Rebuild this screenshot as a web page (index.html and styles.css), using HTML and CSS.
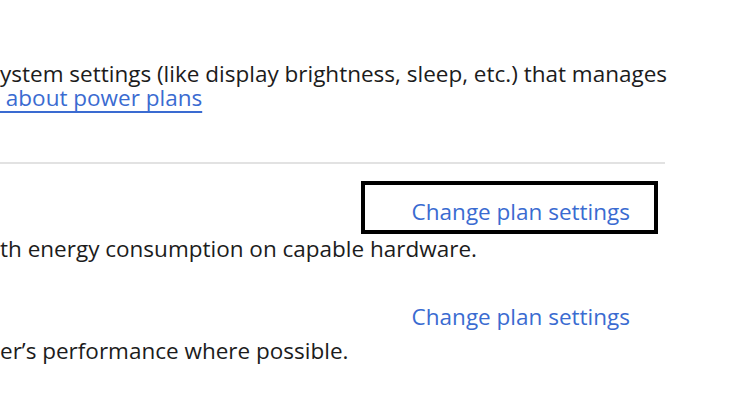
FILE: index.html
```html
<!DOCTYPE html>
<html>
<head>
<meta charset="utf-8">
<link rel="stylesheet" href="styles.css">
</head>
<body>
<div class="page">
  <section class="intro">
    <p class="line">ystem settings (like display brightness, sleep, etc.) that manages</p>
    <p class="line"><a class="link" href="#">&nbsp;about power plans</a></p>
  </section>
  <hr class="divider">
  <section class="plan">
    <div class="plan-head"><a class="link change highlighted" href="#">Change plan settings</a></div>
    <p class="desc">th energy consumption on capable hardware.</p>
  </section>
  <section class="plan second">
    <div class="plan-head"><a class="link change" href="#">Change plan settings</a></div>
    <p class="desc">er’s performance where possible.</p>
  </section>
</div>
</body>
</html>
```
FILE: styles.css
```css
html, body {
  margin: 0;
  padding: 0;
  background: #ffffff;
}
body {
  font-family: "Open Sans", "Noto Sans", sans-serif;
  font-size: 22.5px;
  line-height: 22px;
  color: #1c1c1c;
  width: 730px;
  height: 410px;
  overflow: hidden;
}
.page {
  padding-top: 62px;
}
p {
  margin: 0;
}
.intro {
  line-height: 24px;
}
.line {
  white-space: nowrap;
}
.link {
  color: #3a6bd1;
  text-decoration: none;
}
.intro .link {
  text-decoration: underline;
  text-decoration-thickness: 2px;
  text-underline-offset: 5px;
}
.divider {
  border: 0;
  height: 2px;
  background: #e2e2e2;
  width: 665px;
  margin: 52px 0 0 0;
}
.plan-head {
  width: 630px;
  display: flex;
  justify-content: flex-end;
  margin-top: 37px;
}
.second .plan-head {
  margin-top: 46px;
}
.change {
  position: relative;
}
.highlighted::after {
  content: "";
  position: absolute;
  left: -51px;
  right: -28px;
  top: -20px;
  bottom: -11px;
  border: 4px solid #000;
}
.desc {
  margin-top: 15px;
  white-space: nowrap;
}
.second .desc {
  margin-top: 12px;
}
```
